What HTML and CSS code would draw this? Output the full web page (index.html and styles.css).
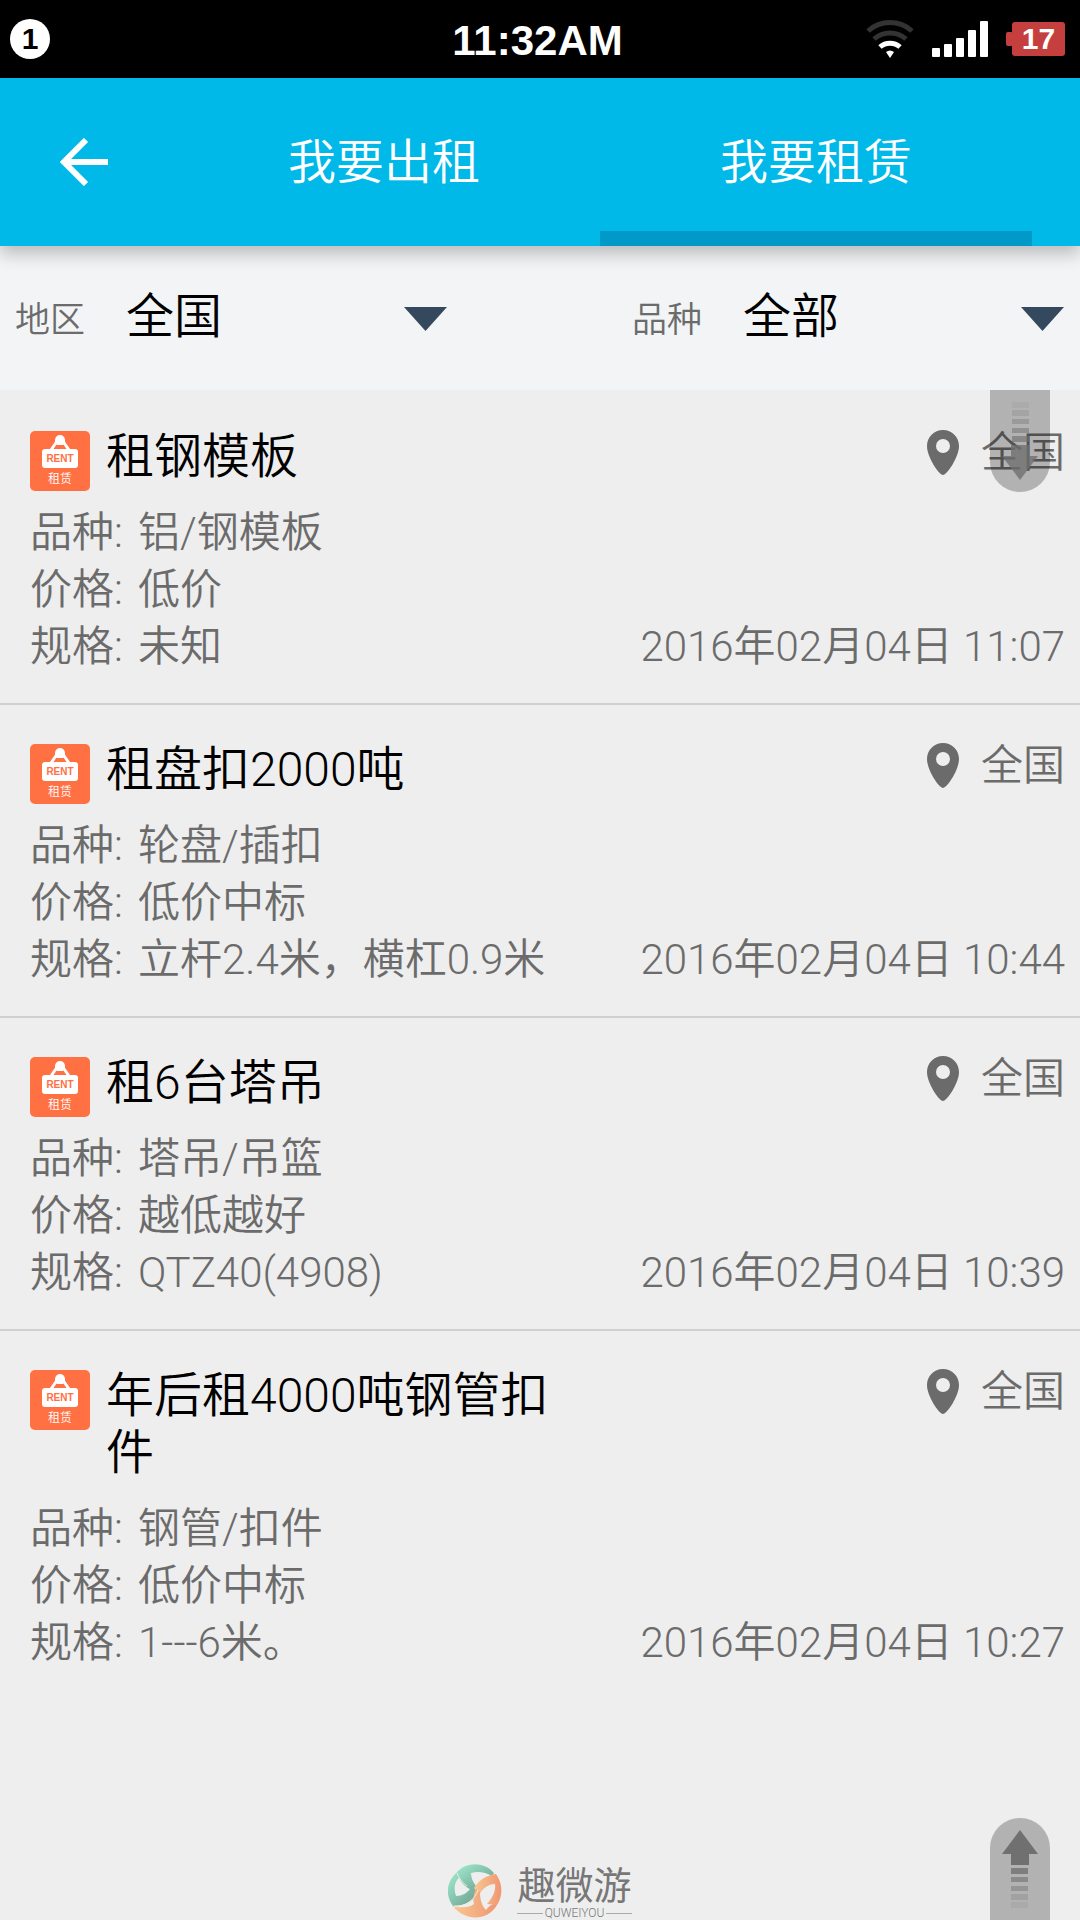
FILE: index.html
```html
<!DOCTYPE html>
<html lang="zh-CN">
<head>
    <meta charset="UTF-8">
    <meta name="viewport" content="width=device-width, initial-scale=1.0">
    <title>我要租赁</title>
    <link rel="stylesheet" href="styles.css">
</head>
<body>
    <!-- Shared icons -->
    <svg class="sprite" aria-hidden="true">
        <symbol id="icon-rent" viewBox="0 0 60 60">
            <rect width="60" height="60" rx="5" fill="#ff7043"/>
            <path d="M21 19L28 9h4l7 10" fill="none" stroke="#fff" stroke-width="3"/>
            <path d="M25 9h10v3l-2 2h-6l-2-2z" fill="#fff"/>
            <circle cx="30" cy="9" r="5" fill="#fff"/>
            <rect x="12" y="18" width="36" height="19" rx="3" fill="#fff"/>
            <text x="30" y="31" class="rent-en">RENT</text>
            <text x="30" y="52" class="rent-cn">租赁</text>
        </symbol>
        <symbol id="icon-pin" viewBox="0 0 32 46">
            <path fill="#6b6b6b" fill-rule="evenodd" d="M16 0C7 0 0 7 0 16c0 11 12 29 16 29s16-18 16-29C32 7 25 0 16 0zm0 9a7 7 0 1 1 0 14a7 7 0 0 1 0-14z"/>
        </symbol>
        <symbol id="icon-caret" viewBox="0 0 43 24">
            <path d="M0 0h43L21.500 24z" fill="#34495e"/>
        </symbol>
        <symbol id="icon-up" viewBox="0 0 36 78">
            <g fill="#707070">
                <path d="M18 0l18 24h-9v11H9V24H0z"/>
                <rect x="9" y="38" width="17" height="6" opacity=".8"/>
                <rect x="9" y="47" width="17" height="5" opacity=".6"/>
                <rect x="9" y="56" width="17" height="5" opacity=".45"/>
                <rect x="9" y="64" width="17" height="6" opacity=".25"/>
                <rect x="9" y="72" width="17" height="6" opacity=".12"/>
            </g>
        </symbol>
    </svg>

    <div class="status-bar">
        <span class="notice">1</span>
        <span class="time">11:32AM</span>
        <div class="status-icons">
            <svg class="wifi" viewBox="0 0 48 38" aria-hidden="true">
                <g fill="none" stroke-width="5">
                    <path d="M2 11a33 33 0 0 1 44 0" stroke="#333"/>
                    <path d="M8 19a24 24 0 0 1 32 0" stroke="#333"/>
                    <path d="M14 27a15 15 0 0 1 20 0" stroke="#fff"/>
                </g>
                <path d="M20 32q4-3 8 0l-4 6z" fill="#fff"/>
            </svg>
            <svg class="signal" viewBox="0 0 56 36" fill="#fff" aria-hidden="true">
                <rect x="0" y="27" width="8" height="9" rx="1"/>
                <rect x="12" y="23" width="8" height="13" rx="1"/>
                <rect x="24" y="17" width="8" height="19" rx="1"/>
                <rect x="36" y="9" width="8" height="27" rx="1"/>
                <rect x="48" y="0" width="8" height="36" rx="1"/>
            </svg>
            <span class="battery">17</span>
        </div>
    </div>

    <header class="app-bar">
        <button class="back" type="button" aria-label="返回">
            <svg viewBox="0 0 48 48" aria-hidden="true">
                <path d="M26 2L4 24l22 22M4 24h44" fill="none" stroke="#fff" stroke-width="6"/>
            </svg>
        </button>
        <nav class="tabs">
            <a href="#lease">我要出租</a>
            <a href="#rent" class="active">我要租赁</a>
        </nav>
    </header>

    <form class="filters">
        <div class="filter">
            <label for="area">地区</label>
            <div class="select">
                <select id="area"><option>全国</option></select>
                <svg aria-hidden="true"><use href="#icon-caret"/></svg>
            </div>
        </div>
        <div class="filter">
            <label for="kind">品种</label>
            <div class="select">
                <select id="kind"><option>全部</option></select>
                <svg aria-hidden="true"><use href="#icon-caret"/></svg>
            </div>
        </div>
    </form>

    <main class="list">
        <article class="item">
            <div class="item-head">
                <svg class="rent" aria-hidden="true"><use href="#icon-rent"/></svg>
                <h2>租钢模板</h2>
                <div class="place"><svg aria-hidden="true"><use href="#icon-pin"/></svg>全国</div>
            </div>
            <p><span class="key">品种:</span> 铝/钢模板</p>
            <p><span class="key">价格:</span> 低价</p>
            <p class="last"><span><span class="key">规格:</span> 未知</span><time>2016年02月04日 11:07</time></p>
        </article>
        <article class="item">
            <div class="item-head">
                <svg class="rent" aria-hidden="true"><use href="#icon-rent"/></svg>
                <h2>租盘扣2000吨</h2>
                <div class="place"><svg aria-hidden="true"><use href="#icon-pin"/></svg>全国</div>
            </div>
            <p><span class="key">品种:</span> 轮盘/插扣</p>
            <p><span class="key">价格:</span> 低价中标</p>
            <p class="last"><span><span class="key">规格:</span> 立杆2.4米，横杠0.9米</span><time>2016年02月04日 10:44</time></p>
        </article>
        <article class="item">
            <div class="item-head">
                <svg class="rent" aria-hidden="true"><use href="#icon-rent"/></svg>
                <h2>租6台塔吊</h2>
                <div class="place"><svg aria-hidden="true"><use href="#icon-pin"/></svg>全国</div>
            </div>
            <p><span class="key">品种:</span> 塔吊/吊篮</p>
            <p><span class="key">价格:</span> 越低越好</p>
            <p class="last"><span><span class="key">规格:</span> QTZ40(4908)</span><time>2016年02月04日 10:39</time></p>
        </article>
        <article class="item">
            <div class="item-head">
                <svg class="rent" aria-hidden="true"><use href="#icon-rent"/></svg>
                <h2>年后租4000吨钢管扣件</h2>
                <div class="place"><svg aria-hidden="true"><use href="#icon-pin"/></svg>全国</div>
            </div>
            <p><span class="key">品种:</span> 钢管/扣件</p>
            <p><span class="key">价格:</span> 低价中标</p>
            <p class="last"><span><span class="key">规格:</span> 1---6米。</span><time>2016年02月04日 10:27</time></p>
        </article>

        <footer class="brand">
            <svg viewBox="0 0 54 54" aria-hidden="true">
                <defs>
                    <linearGradient id="green" x1="0" y1="0" x2="1" y2="1">
                        <stop offset="0" stop-color="#a0ecd0"/>
                        <stop offset="1" stop-color="#6a9a8b"/>
                    </linearGradient>
                    <linearGradient id="orange" x1="0" y1="0" x2="1" y2="0">
                        <stop offset="0" stop-color="#f8c892"/>
                        <stop offset="1" stop-color="#f09672"/>
                    </linearGradient>
                </defs>
                <!-- left and lower green bands -->
                <path d="M9 8C-2 18-3 31 5 42C17 43 28 36 31 25L24 22C20 29 14 32 8 32C5 24 7 16 13 12z" fill="url(#green)"/>
                <!-- upper green bands -->
                <path d="M9 8C18-2 36-3 46 9L44 12C37 8 30 7 23 9C23 14 25 18 28 22L24 26C15 22 11 16 9 8z" fill="url(#green)"/>
                <!-- upper and right orange bands -->
                <path d="M48 10C38 11 30 17 26 24L31 31C35 24 40 20 47 20C48 28 44 34 39 40L49 41C55 32 55 20 48 10z" fill="url(#orange)"/>
                <!-- lower orange bands -->
                <path d="M5 42C16 57 39 58 49 41C44 39 41 42 38 46C34 42 32 36 32 28L28 25C25 31 25 37 26 40C21 44 13 44 5 42z" fill="url(#orange)"/>
                <path d="M9 9C12 16 15 19 19 22M6 42C17 43 27 36 30 26" fill="none" stroke="#eee" stroke-width="1"/>
            </svg>
            <div class="brand-name">
                <strong>趣微游</strong>
                <small>QUWEIYOU</small>
            </div>
        </footer>

        <button class="jump jump-down" type="button" aria-label="到底部"><svg aria-hidden="true"><use href="#icon-up"/></svg></button>
        <button class="jump jump-up" type="button" aria-label="到顶部"><svg aria-hidden="true"><use href="#icon-up"/></svg></button>
    </main>
</body>
</html>
```

FILE: styles.css
```css
* {
    box-sizing: border-box;
}
body {
    display: flex;
    flex-direction: column;
    min-height: 100vh;
    margin: 0;
    font-family: Roboto, "Noto Sans CJK SC", sans-serif;
    font-weight: 350;
    color: #000;
    background-color: #eeeeee;
}
button, select {
    font: inherit;
    color: inherit;
    border: none;
    background: none;
    padding: 0;
    margin: 0;
}
.sprite {
    display: none;
}
.rent-en, .rent-cn {
    text-anchor: middle;
}
.rent-en {
    font-family: "Liberation Sans", sans-serif;
    font-size: 10px;
    font-weight: bold;
    fill: #ff7043;
}
.rent-cn {
    font-size: 12px;
    fill: #fff;
}

/* Status bar */
.status-bar {
    display: grid;
    grid-template-columns: 1fr auto 1fr;
    align-items: center;
    height: 78px;
    padding: 0 15px 0 10px;
    color: #fff;
    background-color: #000;
    font-family: "Liberation Sans", sans-serif;
    font-weight: bold;
}
.notice {
    width: 40px;
    height: 40px;
    border-radius: 50%;
    background-color: #fff;
    color: #000;
    font-size: 30px;
    line-height: 40px;
    text-align: center;
}
.time {
    padding-top: 3px;
    font-size: 42px;
}
.status-icons {
    display: flex;
    justify-content: flex-end;
    align-items: center;
    gap: 18px;
}
.wifi {
    width: 48px;
    height: 38px;
}
.signal {
    width: 56px;
    height: 36px;
}
.battery {
    position: relative;
    width: 53px;
    margin-left: 6px;
    border-radius: 3px;
    background-color: #c63f3f;
    font-size: 30px;
    line-height: 34px;
    text-align: center;
}
.battery::before {
    content: "";
    position: absolute;
    left: -6px;
    top: 10px;
    width: 7px;
    height: 14px;
    border-radius: 2px;
    background-color: #c63f3f;
}

/* Header */
.app-bar {
    position: relative;
    z-index: 1;
    display: flex;
    height: 168px;
    padding-right: 48px;
    color: #fff;
    background-color: #00b9e8;
    box-shadow: 0 8px 16px rgba(0, 0, 0, 0.23);
}
.back {
    width: 168px;
    cursor: pointer;
}
.back svg {
    display: block;
    width: 48px;
    height: 48px;
    margin: 0 auto;
}
.tabs {
    display: flex;
    flex: 1;
}
.tabs a {
    flex: 1;
    padding-top: 17px;
    border-bottom: 15px solid transparent;
    color: #fff;
    font-size: 48px;
    line-height: 136px;
    text-align: center;
    text-decoration: none;
}
.tabs .active {
    border-color: #0099c8;
}

/* Filters */
.filters {
    display: grid;
    grid-template-columns: 1fr 1fr;
    column-gap: 154px;
    height: 144px;
    padding-bottom: 4px;
    background-color: #f2f4f6;
}
.filter {
    display: flex;
    align-items: center;
    gap: 41px;
    padding: 0 16px 0 15px;
}
.filter label {
    color: #6b6b6b;
    font-size: 35px;
}
.select {
    display: grid;
    flex: 1;
    align-items: center;
}
.select select, .select svg {
    grid-area: 1 / 1;
}
.select select {
    appearance: none;
    font-size: 48px;
}
.select svg {
    justify-self: end;
    width: 43px;
    height: 24px;
    margin-top: 6px;
    pointer-events: none;
}

/* List */
.list {
    position: relative;
    display: flex;
    flex: 1;
    flex-direction: column;
    padding-top: 2px;
}
.item {
    padding: 36px 15px 28px 30px;
    border-bottom: 2px solid #cfcfcf;
    color: #6b6b6b;
    font-size: 42px;
    line-height: 57px;
}
.item:last-of-type {
    border-bottom: none;
}
.item-head {
    display: flex;
    align-items: flex-start;
    margin-bottom: 19px;
}
.rent {
    width: 60px;
    height: 60px;
    margin: 3px 16px -6px 0;
}
.item h2 {
    width: 45%;
    margin: 0;
    color: #000;
    font-size: 48px;
    font-weight: inherit;
}
.place {
    display: flex;
    align-items: center;
    gap: 22px;
    margin-left: auto;
    line-height: 50px;
}
.place svg {
    width: 32px;
    height: 46px;
}
.item p {
    margin: 0;
}
.key {
    margin-right: 5px;
}
.item .last {
    display: flex;
    justify-content: space-between;
}

/* Brand */
.brand {
    display: flex;
    justify-content: center;
    align-items: center;
    gap: 15px;
    margin-top: auto;
    padding-bottom: 2px;
    color: #777;
}
.brand svg {
    width: 54px;
    height: 54px;
}
.brand-name strong {
    display: block;
    font-size: 38px;
    font-weight: 400;
    line-height: 44px;
}
.brand-name small {
    display: flex;
    align-items: center;
    gap: 2px;
    font-size: 12px;
    line-height: 10px;
}
.brand-name small::before, .brand-name small::after {
    content: "";
    flex: 1;
    height: 1px;
    background-color: #aaa;
}

/* Jump buttons lie over the list */
.jump {
    position: absolute;
    right: 30px;
    width: 60px;
    height: 102px;
    padding: 12px;
    background-color: rgba(0, 0, 0, 0.25);
    cursor: pointer;
}
.jump svg {
    display: block;
    width: 36px;
    height: 78px;
}
.jump-down {
    top: 0;
    border-radius: 0 0 30px 30px;
}
.jump-down svg {
    transform: rotate(180deg);
    opacity: 0.8;
}
.jump-up {
    bottom: 0;
    border-radius: 30px 30px 0 0;
}
```
